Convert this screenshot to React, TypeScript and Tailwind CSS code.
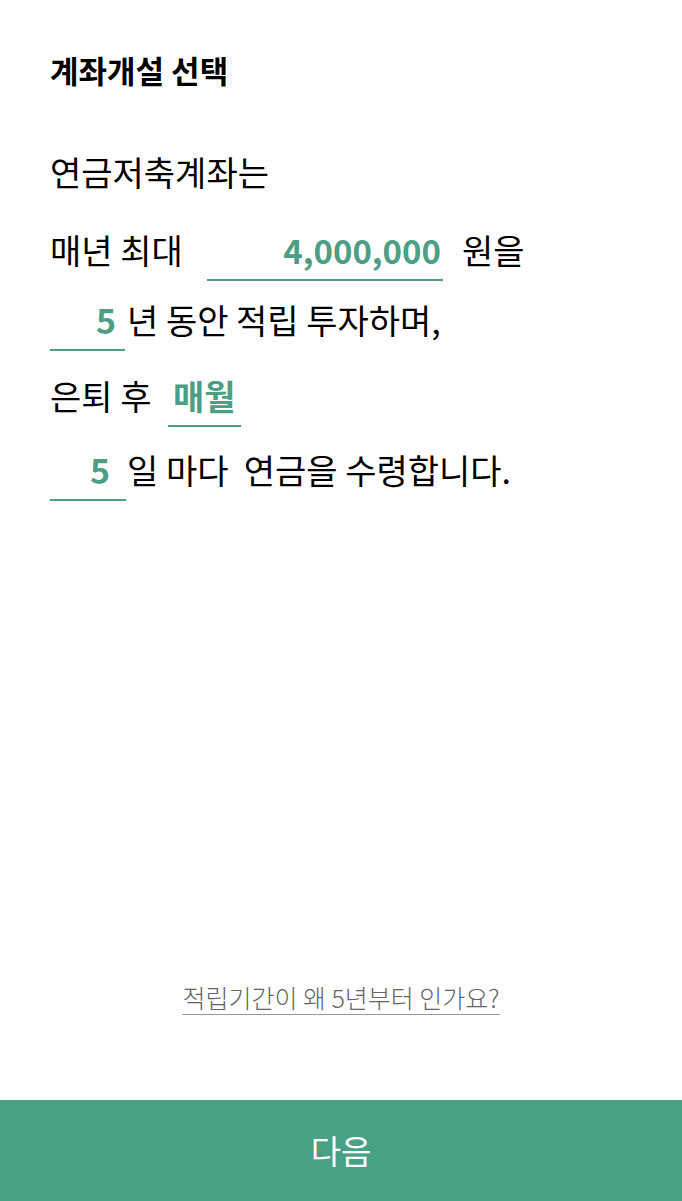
import React from "react";

const font = { fontFamily: '"Noto Sans CJK KR", "Noto Sans", sans-serif' };

const Field = ({ value, className }: { value: string; className: string }) => (
  <span
    className={`inline-block border-b-2 border-[#4c9e85] pb-[4px] font-bold text-[#4c9e85] ${className}`}
  >
    {value}
  </span>
);

export default function App() {
  return (
    <div className="flex h-screen flex-col bg-white text-black" style={font}>
      <div className="flex-1 px-[50px]">
        <h1 className="pt-[48px] text-[31px] font-bold leading-[44px]">계좌개설 선택</h1>

        <div className="mt-[55px] text-[34px] leading-[50px]">
          <p>연금저축계좌는</p>

          <div className="mt-[28px] flex items-baseline">
            <span className="w-[157px]">매년 최대</span>
            <Field value="4,000,000" className="w-[236px] pr-[2px] text-right text-[33px]" />
            <span className="ml-[19px]">원을</span>
          </div>

          <div className="mt-[14px] flex items-baseline">
            <Field value="5" className="w-[75px] pr-[9px] text-right" />
            <span className="ml-[2px]">년 동안 적립 투자하며,</span>
          </div>

          <div className="mt-[20px] flex items-baseline">
            <span className="w-[118px]">은퇴 후</span>
            <Field value="매월" className="w-[73px] pl-[5px]" />
          </div>

          <div className="mt-[18px] flex items-baseline">
            <Field value="5" className="w-[76px] pr-[16px] text-right" />
            <span className="ml-[1px]">일 마다&nbsp; 연금을 수령합니다.</span>
          </div>
        </div>
      </div>

      <div className="flex justify-center pb-[88px]">
        <a className="text-[25px] font-light leading-[30px] text-[#666666] underline decoration-[#999999] decoration-1 underline-offset-[6px]">
          적립기간이 왜 5년부터 인가요?
        </a>
      </div>

      <button className="h-[101px] w-full bg-[#48a184] text-[33px] text-white" style={font}>
        다음
      </button>
    </div>
  );
}
